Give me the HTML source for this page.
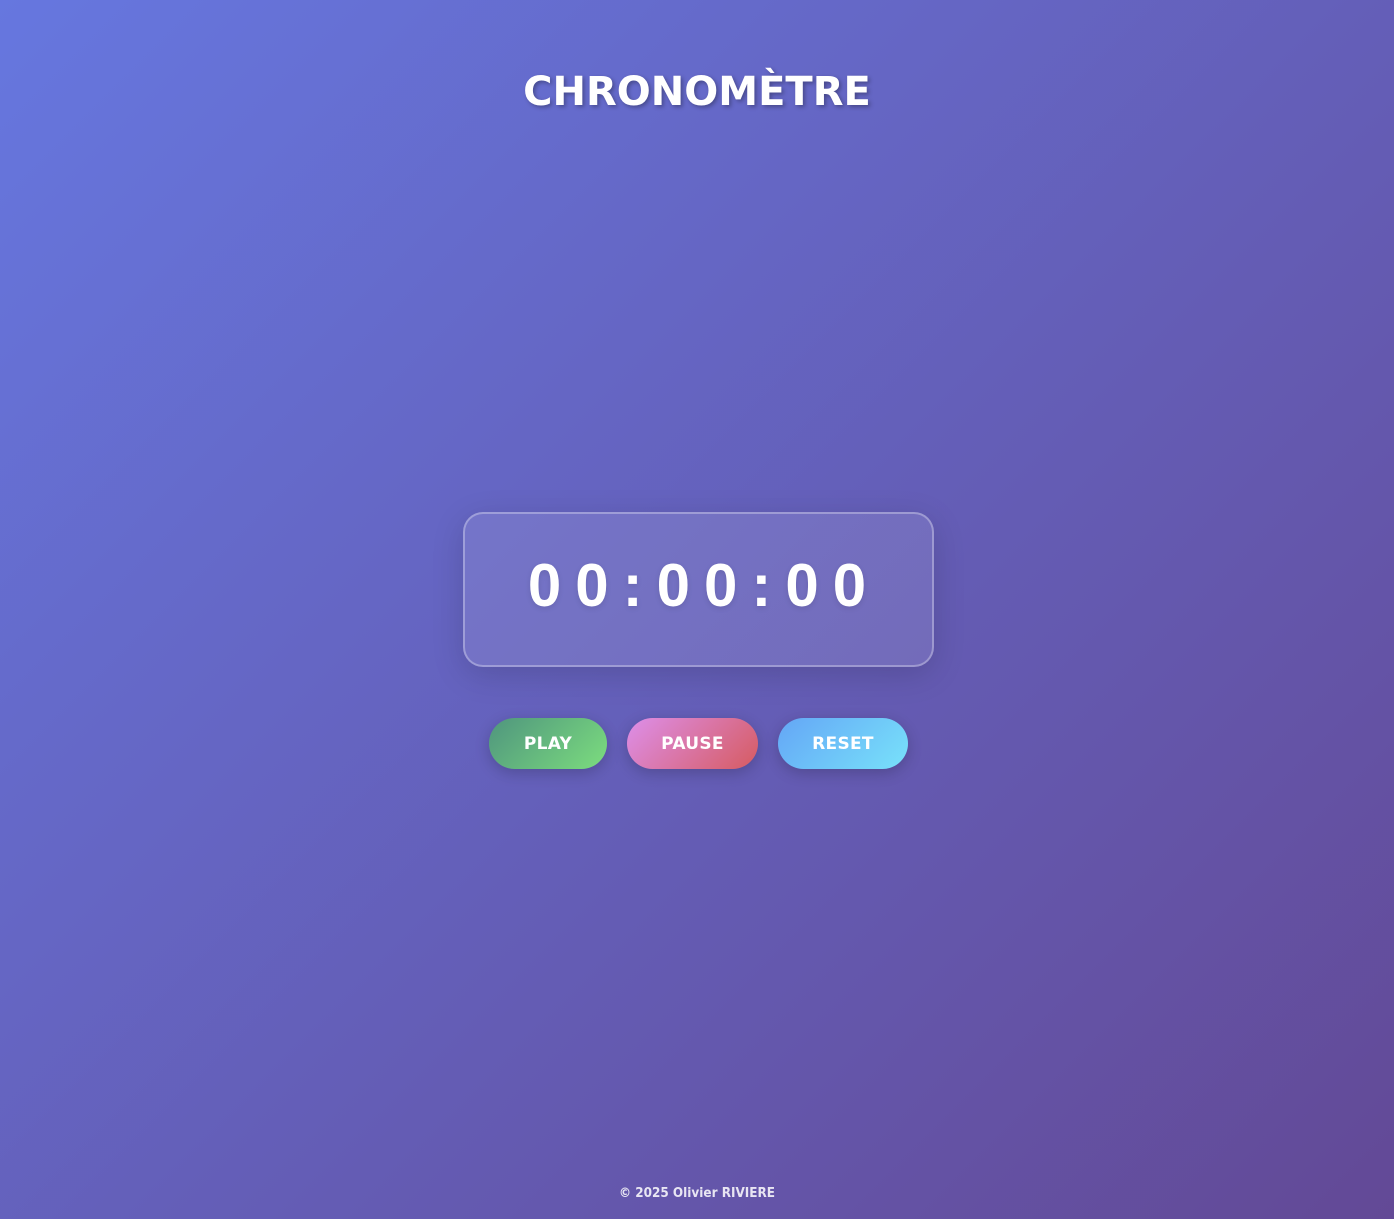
<!DOCTYPE html>
<html><head><meta charset="utf-8"><style>
html,body{margin:0;padding:0;width:1394px;height:1219px;overflow:hidden}
body{background:linear-gradient(135deg,#6677df 0%,#634996 100%);font-family:"DejaVu Sans","Liberation Sans",sans-serif;color:#fff;position:relative}
h1{position:absolute;top:65px;left:0;width:100%;margin:0;text-align:center;font-size:40px;font-weight:bold;letter-spacing:0px;text-shadow:2px 2px 4px rgba(0,0,0,0.3);line-height:54px}
.box{position:absolute;left:463px;top:512px;width:467px;height:151px;border:2px solid rgba(255,255,255,0.3);border-radius:20px;background:rgba(255,255,255,0.1);box-shadow:0 8px 32px rgba(0,0,0,0.15)}
.time{position:absolute;left:0;width:100%;top:550px;text-align:center;font-family:"Liberation Sans",sans-serif;font-weight:bold;font-size:60px;letter-spacing:14px;line-height:72px;padding-left:14px;box-sizing:border-box;text-shadow:0 2px 6px rgba(0,0,0,0.1)}
.btn{position:absolute;top:718px;height:51px;border-radius:26px;font-weight:bold;font-size:17px;letter-spacing:0.3px;line-height:53px;text-align:center;box-shadow:0 4px 15px rgba(0,0,0,0.2)}
.p{left:489px;width:118px;background:linear-gradient(135deg,#4f957e,#7cdd7e)}
.pa{left:627px;width:131px;background:linear-gradient(135deg,#dd8fea,#d65b60)}
.r{left:778px;width:130px;background:linear-gradient(135deg,#64a6f6,#78e2fa)}
.f{position:absolute;top:1186px;left:0;width:100%;text-align:center;font-size:13.4px;font-weight:bold;color:rgba(255,255,255,0.85);font-family:"DejaVu Sans Condensed","DejaVu Sans",sans-serif}
</style></head><body>
<h1>CHRONOMÈTRE</h1>
<div class="box"></div>
<div class="time">00:00:00</div>
<div class="btn p">PLAY</div>
<div class="btn pa">PAUSE</div>
<div class="btn r">RESET</div>
<div class="f">© 2025 Olivier RIVIERE</div>
</body></html>
